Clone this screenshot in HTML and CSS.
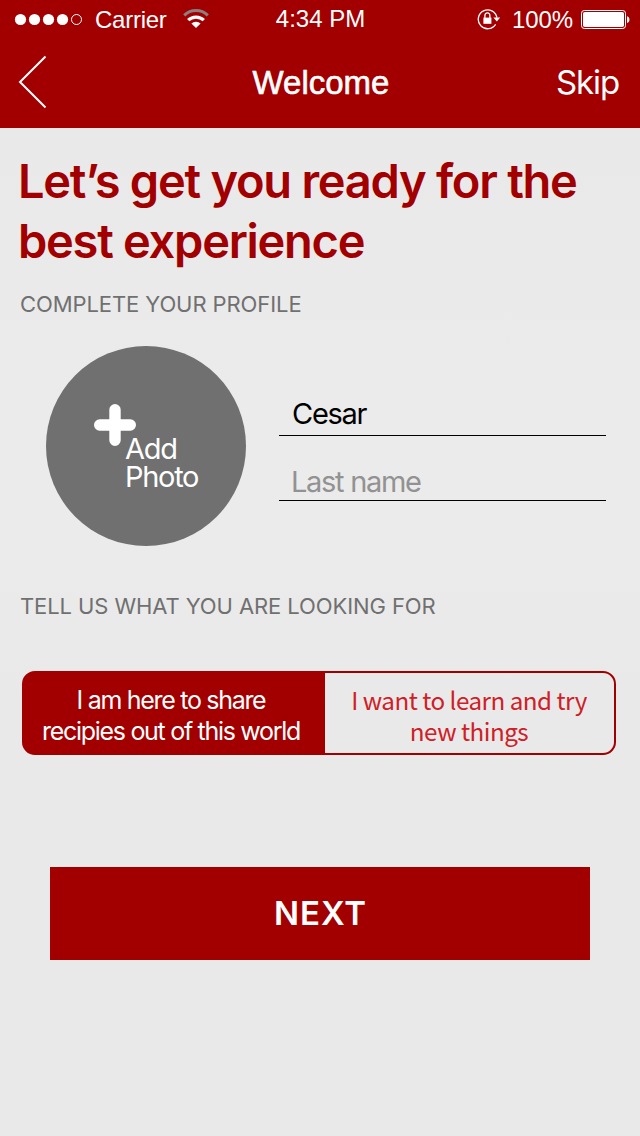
FILE: index.html
```html
<!DOCTYPE html>
<html lang="en">
<head>
<meta charset="utf-8">
<title>Welcome</title>
<link rel="stylesheet" href="styles.css">
</head>
<body>
<div class="screen">
  <header class="top">
    <div class="status">
      <div class="status-left">
        <svg class="signal" width="70" height="14" viewBox="0 0 70 14">
          <g fill="#fff"><circle cx="6.5" cy="7.5" r="5.6"/><circle cx="20.5" cy="7.5" r="5.6"/><circle cx="34.5" cy="7.5" r="5.6"/><circle cx="48.5" cy="7.5" r="5.6"/></g>
          <circle cx="62.5" cy="7.5" r="5" fill="none" stroke="#fff" stroke-width="1"/>
        </svg>
        <span class="carrier">Carrier</span>
        <svg class="wifi" width="26" height="19" viewBox="0 0 26 19">
          <path d="M1.2 6.3 A17 17 0 0 1 24.8 6.3" fill="none" stroke="#8c7f7f" stroke-width="3"/>
          <path d="M5.2 11.2 A11.2 11.2 0 0 1 20.8 11.2" fill="none" stroke="#fff" stroke-width="3.2"/>
          <path d="M8.4 14.6 A6.8 6.8 0 0 1 17.6 14.6 L13 19 Z" fill="#fff"/>
        </svg>
      </div>
      <span class="clock">4:34 PM</span>
      <div class="status-right">
        <svg class="lock" width="24" height="22" viewBox="0 0 24 22">
          <path d="M18.6 16.4 A9.4 9.4 0 1 1 19.9 9.6" fill="none" stroke="#fff" stroke-width="1.3"/>
          <path d="M16.4 9.6h6.8l-3.4 4z" fill="#fff"/>
          <rect x="6.4" y="9.6" width="8" height="6.2" fill="#fff"/>
          <path d="M7.9 10V7.8a2.5 2.9 0 0 1 5 0V10" fill="none" stroke="#fff" stroke-width="1.3"/>
        </svg>
        <span class="percent">100%</span>
        <svg class="battery" width="50" height="20" viewBox="0 0 50 20">
          <rect x=".5" y=".5" width="44" height="18" rx="2.8" fill="none" stroke="#fff"/>
          <rect x="2" y="2" width="41" height="15" rx="1.8" fill="#fff"/>
          <path d="M46 6.2c3.3.6 3.3 6.2 0 6.8z" fill="#fff"/>
        </svg>
      </div>
    </div>
    <nav class="nav">
      <svg class="back" width="30" height="54" viewBox="0 0 30 54"><path d="M27.5 1.5 L2 27 L27.5 52.5" fill="none" stroke="#fff" stroke-width="2"/></svg>
      <h1 class="title">Welcome</h1>
      <span class="skip">Skip</span>
    </nav>
  </header>
  <main class="content">
    <h2 class="headline">Let’s get you ready for the<br>best experience</h2>
    <p class="label label-profile">COMPLETE YOUR PROFILE</p>
    <section class="profile">
      <div class="photo">
        <svg class="plus" width="42" height="42" viewBox="0 0 42 42"><path d="M21 5.7V36.3M5.7 21H36.3" stroke="#fff" stroke-width="11.4" stroke-linecap="round"/></svg>
        <span class="photo-text">Add<br>Photo</span>
      </div>
      <div class="fields">
        <div class="field first"><span>Cesar</span></div>
        <div class="field last"><span>Last name</span></div>
      </div>
    </section>
    <p class="label label-looking">TELL US WHAT YOU ARE LOOKING FOR</p>
    <div class="segments">
      <div class="segment active"><span>I am here to share</span><span>recipies out of this world</span></div>
      <div class="segment"><span>I want to learn and try</span><span>new things</span></div>
    </div>
    <div class="next"><span>NEXT</span></div>
  </main>
</div>
</body>
</html>
```
FILE: styles.css
```css
* { box-sizing: border-box; margin: 0; padding: 0; }
body { font-family: Inter, "Liberation Sans", sans-serif; }
.screen { width: 640px; height: 1136px; background: linear-gradient(#e9e9e9 128px, #ebebeb 400px, #ebebeb 540px, #e9e9e9 700px); overflow: hidden; white-space: nowrap; }
svg { display: block; flex: none; }

.top { height: 128px; background: #a20000; color: #fff; }
.status { height: 40px; display: grid; grid-template-columns: 1fr auto 1fr; font: 24px/40px "Liberation Sans", Arial, sans-serif; }
.status-left, .status-right { display: flex; align-items: flex-start; }
.status-left { padding-left: 14px; }
.status-right { justify-content: flex-end; padding-right: 9px; }
.signal { margin-top: 12px; }
.carrier { margin-left: 11px; letter-spacing: -0.25px; }
.wifi { margin: 9px 0 0 16px; }
.clock { line-height: 38px; padding-left: 1px; }
.lock { margin: 8px 11px 0 0; }
.percent { margin-right: 8px; letter-spacing: -0.1px; }
.battery { margin-top: 10px; }

.nav { height: 88px; display: grid; grid-template-columns: 1fr auto 1fr; align-items: start; padding: 15px 21px 0 18px; }
.title { padding-left: 5px; font: 33px/56px "Liberation Sans", Arial, sans-serif; -webkit-text-stroke: 0.6px #fff; }
.skip { justify-self: end; font-size: 33px; line-height: 54px; letter-spacing: -1.1px; }

.content { padding-top: 23px; display: flex; flex-direction: column; }
.headline { padding-left: 18px; font-size: 47px; font-weight: 600; line-height: 60px; letter-spacing: -1.26px; color: #a20000; }
.label { padding-left: 20px; font-size: 22px; line-height: 32px; letter-spacing: -0.09px; color: #707070; }
.label-profile { margin-top: 17px; }
.profile { display: flex; margin-top: 26px; padding-left: 46px; }
.photo { width: 200px; height: 200px; border-radius: 50%; background: #707070; color: #fff; display: flex; padding: 58px 0 0 48px; }
.photo-text { margin: 31px 0 0 -11px; font-size: 29px; line-height: 28px; letter-spacing: -1.3px; }
.fields { width: 327px; margin-left: 33px; padding-top: 46px; font-size: 29px; letter-spacing: -1.3px; }
.field { border-bottom: 1px solid #000; padding-left: 12px; }
.first { height: 44px; padding-left: 13px; line-height: 43px; color: #000; }
.last { height: 65px; padding-top: 23px; line-height: 46px; color: #929292; }
.label-looking { margin-top: 44px; }
.segments { display: flex; width: 594px; height: 84px; margin: 49px 0 0 22px; border: 2px solid #a20000; border-radius: 13px; background: linear-gradient(90deg, #a20000 301px, transparent 301px); line-height: 31px; }
.segment { flex: 1; display: flex; flex-direction: column; align-items: center; padding: 11px 1px 0 0; color: #cf2027; font-family: "Noto Sans CJK SC", "Noto Sans", sans-serif; font-size: 24.2px; letter-spacing: -0.5px; }
.active { flex: none; width: 301px; padding: 12px 7px 0 0; color: #fff; font-family: Inter, sans-serif; font-size: 25px; letter-spacing: -1.3px; }
.next { width: 540px; height: 93px; margin: 112px 0 0 50px; background: #a20000; color: #fff; display: flex; justify-content: center; font-size: 33px; font-weight: 600; line-height: 92px; letter-spacing: 0.9px; padding-left: 1px; }
```
